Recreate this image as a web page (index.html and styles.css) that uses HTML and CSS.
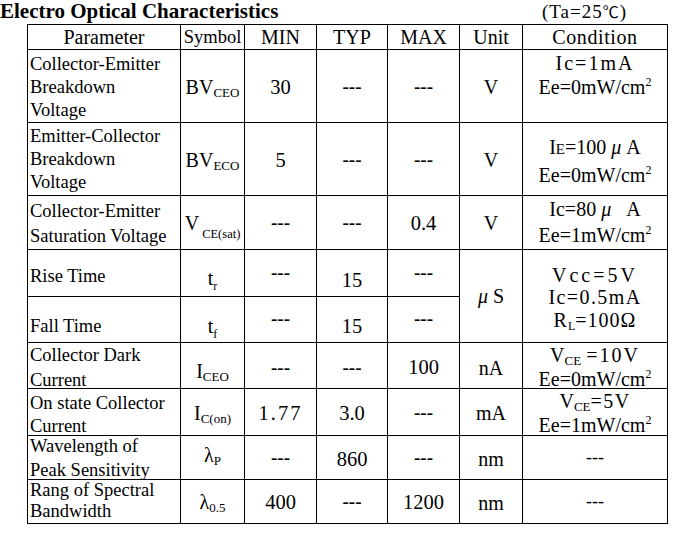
FILE: index.html
```html
<!DOCTYPE html>
<html>
<head>
<meta charset="utf-8">
<title>Electro Optical Characteristics</title>
<link rel="stylesheet" href="styles.css">
</head>
<body>
<div class="titlebar">
  <h1 class="title">Electro Optical Characteristics</h1>
  <span class="ta">(Ta=25<span class="cjk">℃</span>)</span>
</div>
<table class="spec">
  <colgroup>
    <col class="c-par"><col class="c-sym"><col class="c-min"><col class="c-typ"><col class="c-max"><col class="c-unit"><col class="c-cond">
  </colgroup>
  <tr class="hd">
    <th>Parameter</th><th class="sym">Symbol</th><th>MIN</th><th>TYP</th><th>MAX</th><th>Unit</th><th class="cond-h">Condition</th>
  </tr>
  <tr class="r1">
    <td class="p">Collector-Emitter<br>Breakdown<br>Voltage</td>
    <td class="s">BV<sub class="sb">CEO</sub></td>
    <td class="v">30</td><td class="d">---</td><td class="d">---</td><td class="u">V</td>
    <td class="c"><span class="ls2">Ic=1mA</span><br>Ee=0mW/cm<sup class="sp">2</sup></td>
  </tr>
  <tr class="r2">
    <td class="p">Emitter-Collector<br>Breakdown<br>Voltage</td>
    <td class="s">BV<sub class="sb">ECO</sub></td>
    <td class="v">5</td><td class="d">---</td><td class="d">---</td><td class="u">V</td>
    <td class="c">I<span class="sc">E</span>=100 <span class="mu">μ</span> A<br>Ee=0mW/cm<sup class="sp">2</sup></td>
  </tr>
  <tr class="r3">
    <td class="p">Collector-Emitter<br>Saturation Voltage</td>
    <td class="s">V<sub class="sb sat">CE(sat)</sub></td>
    <td class="d">---</td><td class="d">---</td><td class="v">0.4</td><td class="u">V</td>
    <td class="c">Ic=80 <span class="mu">μ</span>&nbsp;&nbsp; A<br>Ee=1mW/cm<sup class="sp">2</sup></td>
  </tr>
  <tr class="r-rise">
    <td class="p">Rise Time</td>
    <td class="s">t<sub class="sb tsub">r</sub></td>
    <td class="d">---</td><td class="v">15</td><td class="d">---</td>
    <td class="u" rowspan="2"><span class="mu">μ</span> S</td>
    <td class="c" rowspan="2"><span class="ls3">Vcc=5V</span><br><span class="ls14">Ic=0.5mA</span><br><span class="ls1">R<sub class="sb rl">L</sub>=100Ω</span></td>
  </tr>
  <tr class="r-fall">
    <td class="p">Fall Time</td>
    <td class="s">t<sub class="sb tsub">f</sub></td>
    <td class="d">---</td><td class="v">15</td><td class="d">---</td>
  </tr>
  <tr class="r-dark">
    <td class="p"><div class="ov">Collector Dark<br>Current</div></td>
    <td class="s">I<sub class="sb">CEO</sub></td>
    <td class="d">---</td><td class="d">---</td><td class="v">100</td><td class="u">nA</td>
    <td class="c"><div class="ov">V<sub class="sb">CE</sub>&nbsp;<span class="ls2">=10V</span><br>Ee=0mW/cm<sup class="sp">2</sup></div></td>
  </tr>
  <tr class="r-on">
    <td class="p"><div class="ov">On state Collector<br>Current</div></td>
    <td class="s">I<sub class="sb">C(on)</sub></td>
    <td class="v ls2">1.77</td><td class="v">3.0</td><td class="d">---</td><td class="u">mA</td>
    <td class="c"><div class="ov">V<sub class="sb">CE</sub><span class="ls14">=5V</span><br>Ee=1mW/cm<sup class="sp">2</sup></div></td>
  </tr>
  <tr class="r-wave">
    <td class="p"><div class="ov">Wavelength of<br>Peak Sensitivity</div></td>
    <td class="s">λ<sub class="sb">P</sub></td>
    <td class="d">---</td><td class="v">860</td><td class="d">---</td><td class="u">nm</td>
    <td class="c cd">---</td>
  </tr>
  <tr class="r-rang">
    <td class="p">Rang of Spectral<br>Bandwidth</td>
    <td class="s">λ<sub class="sb">0.5</sub></td>
    <td class="v">400</td><td class="d">---</td><td class="v">1200</td><td class="u">nm</td>
    <td class="c cd">---</td>
  </tr>
</table>
</body>
</html>
```

FILE: styles.css
```css
body {
  margin: 0;
  font-family: "Liberation Serif", "Times New Roman", serif;
  color: #000;
  background: #fff;
}

.titlebar {
  display: flex;
  justify-content: space-between;
  align-items: flex-start;
  width: 627px;
  height: 24px;
}

.title {
  margin: 0;
  font-size: 21px;
  line-height: 22px;
  font-weight: bold;
}

.ta {
  font-size: 19px;
  line-height: 22px;
  letter-spacing: 1px;
}

.cjk {
  font-family: "Noto Sans CJK SC", sans-serif;
  font-size: 16px;
}

.spec {
  margin-left: 27px;
  border-collapse: collapse;
  table-layout: fixed;
  width: 641px;
}

.c-par { width: 153px; }
.c-sym { width: 64px; }
.c-min { width: 72px; }
.c-typ { width: 71px; }
.c-max { width: 72px; }
.c-unit { width: 63px; }
.c-cond { width: 145px; }

.spec th,
.spec td {
  border: 1px solid #000;
  padding: 0;
  vertical-align: middle;
  text-align: center;
  white-space: nowrap;
}

.spec th {
  font-weight: normal;
  font-size: 20px;
  line-height: 23px;
}

.spec th.sym { font-size: 18.5px; }
.spec th.cond-h { letter-spacing: 0.6px; }

.hd { height: 25px; }
.r1 { height: 73px; }
.r2 { height: 73px; }
.r3 { height: 54px; }
.r-rise { height: 47px; }
.r-fall { height: 46px; }
.r-dark { height: 46px; }
.r-on { height: 47px; }
.r-wave { height: 44px; }
.r-rang { height: 44px; }

.spec td.p {
  text-align: left;
  padding-left: 2px;
  font-size: 18.5px;
  line-height: 23px;
}

.s { font-size: 20px; line-height: 24px; }
.v { font-size: 20.5px; line-height: 24px; }
.u { font-size: 20px; line-height: 24px; }
.c { font-size: 20px; line-height: 23.3px; }
.d { font-size: 19px; line-height: 23px; font-weight: bold; }
.spec td.cd { font-size: 18px; font-weight: normal; }

.sb {
  font-size: 13px;
  line-height: 0;
  letter-spacing: 0;
  vertical-align: -3px;
}
.sb.sat { font-size: 12.5px; vertical-align: -8px; margin-left: 3px; }
.sb.tsub { font-size: 12px; vertical-align: -5px; }
.sb.rl { font-size: 12px; vertical-align: -3px; }

.sp {
  font-size: 12px;
  line-height: 0;
  vertical-align: 8px;
}

.sc { font-size: 15px; }
.mu { font-style: italic; }

.ls1 { letter-spacing: 1px; }
.ls14 { letter-spacing: 1.4px; }
.ls2 { letter-spacing: 2px; }
.ls3 { letter-spacing: 3px; }

/* row 1 */
.r1 td.p { padding-top: 3px; }
.r1 .s, .r1 .v, .r1 .u { padding-top: 2px; }
.r1 .c { padding-bottom: 21px; }

/* row 2 */
.r2 .s, .r2 .u { padding-top: 2px; }
.r2 .v, .r2 .d { padding-top: 1px; }
.r2 .c { line-height: 26px; padding-top: 3px; }

/* row 3 */
.r3 td.p { line-height: 24.4px; padding-top: 2px; }
.r3 .v { padding-top: 1px; }
.r3 .c { line-height: 25.5px; }

/* rise / fall */
.r-rise td.p { padding-top: 6px; }
.r-rise .s { padding-top: 9px; }
.r-rise .v { padding-top: 14px; }
.r-rise .d { padding-bottom: 2px; }
.r-rise .c { line-height: 22.5px; padding-top: 3px; }

.r-fall td.p { padding-top: 14px; }
.r-fall .s { padding-top: 12px; }
.r-fall .v { padding-top: 13px; }
.r-fall .d { padding-bottom: 2px; }

/* dark current */
.r-dark .p .ov { line-height: 24.3px; margin: -2px 0 -6px; }
.r-dark .c .ov { line-height: 24.3px; margin: -3px 0 -6px; }
.r-dark .s { padding-top: 11px; }
.r-dark .d, .r-dark .v { padding-top: 3px; }
.r-dark .u { padding-top: 4px; }

/* on state */
.r-on .p .ov { line-height: 23.4px; margin: -1px 0 -7px; }
.r-on .c .ov { line-height: 23.4px; margin: -2px 0 -5px; }
.r-on .s, .r-on .v, .r-on .u { padding-top: 2px; }

/* wavelength */
.r-wave .p .ov { line-height: 23.7px; margin: -1px 0 -4px; }
.r-wave .s { padding-bottom: 5px; }
.r-wave .v { padding-top: 3px; }
.r-wave .u { padding-top: 2px; }

/* spectral bandwidth */
.r-rang td.p { line-height: 20.3px; padding-bottom: 2px; }
.r-rang .u { padding-top: 2px; }
.r-rang .v { padding-top: 1px; }
```
